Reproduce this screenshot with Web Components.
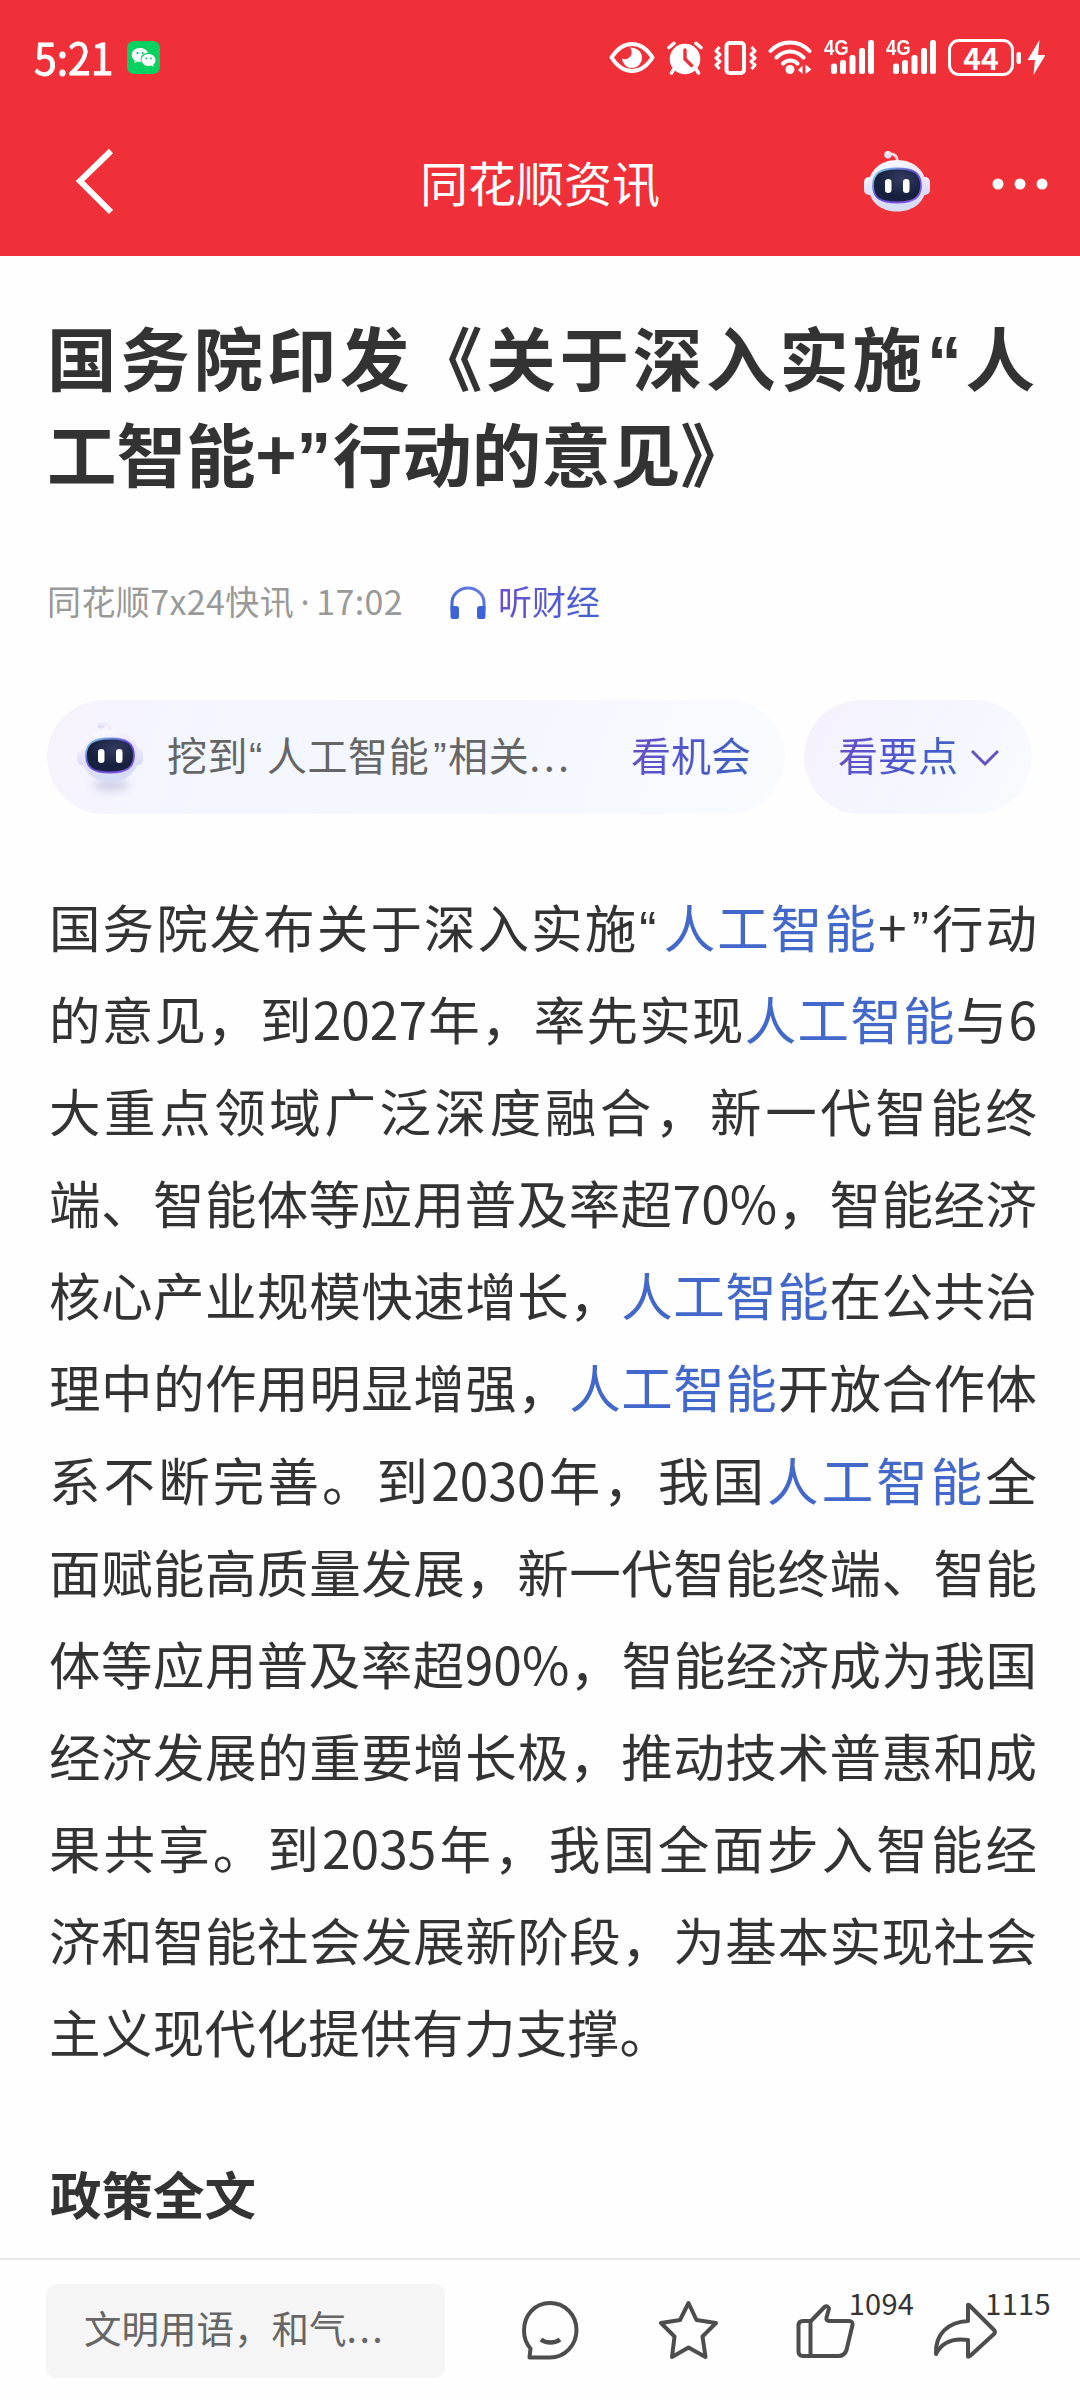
<!DOCTYPE html>
<html lang="zh-CN">
<head>
<meta charset="utf-8">
<title>同花顺资讯</title>
<style>
html,body{margin:0;padding:0;background:#fefefe}
body{font-family:"Noto Sans CJK SC",sans-serif;color:#333;width:1080px;height:2400px;overflow:hidden}
</style>
</head>
<body>
<news-page>
  <status-bar slot="top" time="5:21" battery="44"></status-bar>
  <title-bar slot="top">同花顺资讯</title-bar>
  <article-title>
    <text-line>国务院印发《关于深入实施<quote-mark>“</quote-mark>人</text-line>
    <text-line style="--w:max-content">工智能+<quote-mark close>”</quote-mark>行动的意见》</text-line>
  </article-title>
  <article-meta source="同花顺7x24快讯" time="17:02">听财经</article-meta>
  <hint-row>
    <hint-pill wide action="看机会">挖到<quote-mark>“</quote-mark>人工智能<quote-mark close>”</quote-mark>相关<span style="letter-spacing:3.300px">...</span></hint-pill>
    <hint-pill chevron action="看要点"></hint-pill>
  </hint-row>
  <article-body>
    <text-line>国务院发布关于深入实施<quote-mark>“</quote-mark><term-link>人工智能</term-link>+<quote-mark close>”</quote-mark>行动</text-line>
    <text-line>的意见，到2027年，率先实现<term-link>人工智能</term-link>与6</text-line>
    <text-line>大重点领域广泛深度融合，新一代智能终</text-line>
    <text-line>端、智能体等应用普及率超70%，智能经济</text-line>
    <text-line>核心产业规模快速增长，<term-link>人工智能</term-link>在公共治</text-line>
    <text-line>理中的作用明显增强，<term-link>人工智能</term-link>开放合作体</text-line>
    <text-line>系不断完善。到2030年，我国<term-link>人工智能</term-link>全</text-line>
    <text-line>面赋能高质量发展，新一代智能终端、智能</text-line>
    <text-line>体等应用普及率超90%，智能经济成为我国</text-line>
    <text-line>经济发展的重要增长极，推动技术普惠和成</text-line>
    <text-line>果共享。到2035年，我国全面步入智能经</text-line>
    <text-line>济和智能社会发展新阶段，为基本实现社会</text-line>
    <text-line style="--w:622px">主义现代化提供有力支撑。</text-line>
  </article-body>
  <section-heading>政策全文</section-heading>
  <action-bar slot="bottom" likes="1094" shares="1115">文明用语，和气<span style="letter-spacing:2.500px">...</span></action-bar>
</news-page>
<script>
const define = (name, render) => customElements.define(name, class extends HTMLElement {
  constructor(){ super(); this.attachShadow({mode:'open'}); }
  connectedCallback(){ this.shadowRoot.innerHTML = render(this); }
});

define('news-page', () => `<style>
:host{display:flex;flex-direction:column;width:1080px;height:2400px}
header{background:#f03038;height:256px;flex:none;display:flex;flex-direction:column}
main{flex:1;min-height:0;overflow:hidden;display:flex;flex-direction:column;padding:52px 43px 0 48px}
</style><header><slot name="top"></slot></header><main><slot></slot></main><slot name="bottom"></slot>`);

define('signal-icon', () => `<style>
:host{display:block;position:relative;width:51px;height:35px}svg{display:block}
span{position:absolute;left:0;top:-2px;font:700 22px/20px "Liberation Sans",sans-serif;color:#fff;transform:scaleX(.84);transform-origin:0 0}
</style><span>4G</span><svg width="51" height="35" fill="#fff"><rect x="7" y="23.500" width="6" height="10.500" rx="2.500"/><rect x="16" y="20" width="6" height="14" rx="2.500"/><rect x="25.500" y="15" width="6" height="19" rx="2.500"/><rect x="35" y="8" width="6" height="26" rx="2.500"/><rect x="44" y="0" width="6" height="34" rx="2.500"/></svg>`);

define('status-bar', el => `<style>
:host{display:flex;height:112px;color:#fff;padding:3px 35px 0 34px;box-sizing:border-box;align-items:center}
.t{font:400 44px/60px "Noto Sans CJK SC",sans-serif;width:93px;white-space:nowrap;margin-top:-3px}
.t span{display:inline-block;transform:scaleX(.93);transform-origin:0 50%;-webkit-text-stroke:.9px #fff}
.i{margin-left:auto;display:flex;align-items:center;height:40px}
svg{display:block}
.b{box-sizing:border-box;width:66px;height:37px;border:3px solid #fff;border-radius:11px;font:700 30px/30px "Noto Sans CJK SC",sans-serif;text-align:center}
</style>
<span class="t"><span>${el.getAttribute('time')}</span></span>
<svg width="33" height="33" viewBox="0 0 33 33"><rect width="33" height="33" rx="7" fill="#07d160"/><g fill="#fff"><path d="M13 7c-5 0-8.300 3-8.300 7 0 2.200 1.200 4 3 5.200L7.300 22l3-1.500c1.300.4 2.700.5 4 .3C12 15 17 11.500 21 12c-1-3-4-5-8-5z"/><path d="M21.500 13c-4 0-7 2.700-7 6s3 6 7 6c1 0 2-.2 2.800-.5l2.400 1.300-.5-2.200c1.500-1 2.300-2.700 2.300-4.600 0-3.300-3-6-7-6z"/></g><g fill="#07c160"><circle cx="10.500" cy="12" r="1.100"/><circle cx="15.700" cy="12" r="1.100"/><circle cx="19.400" cy="17.500" r=".9"/><circle cx="24" cy="17.500" r=".9"/></g></svg>
<div class="i">
<svg width="46" height="33" viewBox="0 0 46 33" style="margin-right:12px"><path d="M2.500 16.500C8 8 15 3 23 3s15 5 20.500 13.500C38 25 31 30 23 30S8 25 2.500 16.500z" fill="none" stroke="#fff" stroke-width="4" stroke-linejoin="round"/><path d="M21 6.500c6-.2 12 3.500 12 10a10 10 0 0 1-20 1c3 1.500 7 .5 8.700-2.500 1.600-3 1.300-6-.7-8.500z" fill="#fff"/></svg>
<svg width="36" height="34" viewBox="0 0 36 34" style="margin-right:11px"><g stroke="#fff" stroke-width="3.500" stroke-linecap="round"><path d="M2 6.500 7 2.300M34 6.500 29 2.300M7 28l-2.500 4M29 28l2.500 4"/></g><circle cx="18" cy="18" r="15.300" fill="#fff"/><path d="M18 9v9l6.500 6.500" fill="none" stroke="#f03038" stroke-width="3.400" stroke-linecap="round"/></svg>
<svg width="43" height="34" viewBox="0 0 43 34" style="margin-right:11px" fill="none" stroke="#fff"><rect x="12.500" y="2" width="17.500" height="30" rx="3" stroke-width="4"/><path d="M5.500 6 2 10l4 3.500-4 3.500 4 3.500L2 24l3.500 4M37.500 6l3.500 4-4 3.500 4 3.500-4 3.500 4 3.500-3.500 4" stroke-width="3" stroke-linejoin="round"/></svg>
<svg width="45" height="35" viewBox="0 0 45 35" style="margin-right:11px" fill="none" stroke="#fff" stroke-width="4" stroke-linecap="round"><path d="M2.500 11C13-.5 31-.5 41.500 11M8.500 17.500c8-8 19-8 27 0M15 23.500c4-4 10.500-4 14.500 0"/><circle cx="22" cy="29.500" r="4.500" fill="#fff" stroke="none"/><path d="m34.500 25.500v8.500l-4.500-4zM37.500 24.500v9.500l6-4.500z" fill="#fff" stroke="none"/></svg>
<signal-icon style="margin-right:11px"></signal-icon><signal-icon style="margin-right:11px"></signal-icon>
<div class="b">${el.getAttribute('battery')}</div>
<svg width="31" height="36" viewBox="0 0 31 36" fill="#fff"><rect x="2.500" y="12" width="4.500" height="12" rx="2"/><path d="M25.500 0 13.500 20h7.500l-1.500 15 12-20h-7.500z"/></svg>
</div>`);

let uid = 0;
define('robot-face', el => { const n = ++uid; return `<style>:host{display:block}svg{display:block;overflow:visible}</style>
<svg width="66" height="61" viewBox="0 0 66 61"><defs>
<linearGradient id="h${n}" x1="0" y1="0" x2=".3" y2="1"><stop offset="0" stop-color="#fff"/><stop offset=".5" stop-color="#e9e4fb"/><stop offset="1" stop-color="#d6dcf5"/></linearGradient>
<linearGradient id="r${n}" x1="0" y1="0" x2="1" y2="1"><stop offset="0" stop-color="#7fd4e8"/><stop offset=".5" stop-color="#6247d8"/><stop offset="1" stop-color="#8b5cf0"/></linearGradient>
<radialGradient id="f${n}" cx=".6" cy=".3"><stop offset="0" stop-color="#333b60"/><stop offset="1" stop-color="#17213f"/></radialGradient>
<filter id="b${n}" x="-50%" y="-100%" width="200%" height="300%"><feGaussianBlur stdDeviation="4"/></filter></defs>
${el.hasAttribute('shadow') ? `<ellipse cx="34" cy="64" rx="18" ry="6" fill="#9ca4ca" opacity=".45" filter="url(#b${n})"/>` : ''}
<g fill="url(#h${n})"><circle cx="24" cy="3.700" r="3.700"/><path d="M25 3c5-.5 8 2 8.500 7" fill="none" stroke="${el.hasAttribute('shadow') ? '#f0eafa' : '#f5dfe7'}" stroke-width="2.600"/><rect x="0" y="26" width="14" height="18" rx="5"/><rect x="52" y="26" width="14" height="18" rx="5"/><path d="M33 9C50 9 62 20 62 35S50 60.500 33 60.500 4.500 50 4.500 35 16 9 33 9z"/></g>
<path d="M33 17.500c17 0 24 5 24 17s-7 17-24 17-24-5-24-17 7-17 24-17z" fill="url(#f${n})" stroke="url(#r${n})" stroke-width="1.800"/>
<rect x="21" y="28" width="6.500" height="14" rx="3.200" fill="#fff"/><rect x="39" y="28" width="6.500" height="14" rx="3.200" fill="#fff"/></svg>`; });

define('title-bar', () => `<style>
:host{display:flex;height:144px;color:#fff;align-items:center;justify-content:space-between;padding:0 32px 0 70px;box-sizing:border-box}
div{width:184px;display:flex;align-items:center}.r{justify-content:space-between}
h1{margin:-6px 38px 0 0;font-size:48px;font-weight:400;line-height:60px}
svg{display:block}
</style><div class="l"><svg width="50" height="76" viewBox="0 0 50 76" fill="none" stroke="#fff" stroke-width="6"><path d="M41 5 10 35l31 31"/></svg></div>
<h1><slot></slot></h1>
<div class="r"><robot-face style="margin-top:-6px"></robot-face><svg width="56" height="12" fill="#fff"><circle cx="6" cy="6" r="5.500"/><circle cx="28" cy="6" r="5.500"/><circle cx="50" cy="6" r="5.500"/></svg></div>`);

define('quote-mark', el => `<style>:host{font-family:"Liberation Sans",sans-serif;line-height:1px;${el.hasAttribute('close') ? 'margin-left:var(--quote-gap,.1em);margin-right:.02em' : 'margin-left:.02em;margin-right:var(--quote-gap,.1em)'}}</style><slot></slot>`);
define('term-link', () => `<style>:host{color:#4368cb}</style><slot></slot>`);
define('text-line', () => `<style>:host{display:block;white-space:nowrap;width:var(--w,auto);text-align:justify;text-align-last:justify;text-spacing-trim:space-all}</style><slot></slot>`);
define('article-title', () => `<style>:host{display:block;--quote-gap:0em;font-size:69.500px;line-height:96px;font-weight:700;height:192px;flex:none;margin:0 2px 0 -1px}</style><slot></slot>`);

define('article-meta', el => `<style>
:host{display:flex;align-items:center;height:50px;margin-top:76px;font-size:34px;line-height:50px;color:#999;flex:none;white-space:nowrap}
.s{width:403px;letter-spacing:.4px;margin-left:-1px}i{display:inline-block;font-style:normal;font-family:"Noto Sans",sans-serif;line-height:1px;width:22px;text-align:center}
.g{background:linear-gradient(100deg,#6c4fd0,#3e63d6);-webkit-background-clip:text;color:transparent}
svg{margin:3px 12px 0 0;display:block}
</style><span class="s">${el.getAttribute('source')}<i>·</i>${el.getAttribute('time')}</span>
<svg width="36" height="34" viewBox="0 0 36 34"><defs><linearGradient id="g" x1="1" y1="0" x2="0" y2="1"><stop stop-color="#6a7be8"/><stop offset="1" stop-color="#3e63d6"/></linearGradient></defs><path d="M2 24V17a16 15 0 0 1 32 0v7" fill="none" stroke="url(#g)" stroke-width="3"/><path d="M.5 20H6q3 0 3 3v7.500q0 2.500-2.500 2.500H3Q.5 33 .5 30.500zM35.500 20H30q-3 0-3 3v7.500q0 2.500 2.500 2.500H33q2.500 0 2.500-2.500z" fill="#3e63d6"/></svg>
<span class="g"><slot></slot></span>`);

define('hint-row', () => `<style>:host{display:flex;justify-content:space-between;margin:74px 0 0 -1px;flex:none;width:985px}</style><slot></slot>`);
define('hint-pill', el => { const w = el.hasAttribute('wide'); return `<style>
:host{display:flex;align-items:center;box-sizing:border-box;height:114px;border-radius:57px;font-size:40px;line-height:60px;white-space:nowrap;
${w ? 'width:738px;padding:0 34px 0 30px;background:linear-gradient(110deg,#f7f2fc 0,#f4f6ff 20%,#f4f7fe 60%,#f8fcff)' : 'width:228px;padding:0 32px 0 34px;background:linear-gradient(120deg,#f6f1fc,#f4f6fe 50%,#f7fbff)'}}
.x{color:#666;margin:-6px 0 0 24px;letter-spacing:.6px}
.a{background:linear-gradient(110deg,#6c4fc0,#5254d0 40%,#3f63c0);-webkit-background-clip:text;color:transparent;margin:-6px 0 0 ${w ? 'auto' : '0'}}
svg{margin:1px 0 0 12px}
</style>${w ? '<robot-face shadow style="margin-top:-11px"></robot-face><span class="x"><slot></slot></span>' : ''}<span class="a">${el.getAttribute('action')}</span>
${el.hasAttribute('chevron') ? '<svg width="30" height="20" viewBox="0 0 30 20" fill="none" stroke="#6352c0" stroke-width="3"><path d="m2 3 13 13L28 3"/></svg>' : ''}`; });

define('article-body', () => `<style>:host{display:block;font-size:51.500px;line-height:92.100px;margin:66px 0 0 1px;flex:none}</style><slot></slot>`);
define('section-heading', () => `<style>:host{display:block;font-size:51.500px;font-weight:700;line-height:80px;margin-top:76px;padding-left:2px;flex:none}</style><slot></slot>`);

define('action-bar', el => `<style>
:host{display:flex;box-sizing:border-box;height:142px;flex:none;border-top:2px solid #e9e9e9;align-items:flex-start;padding:24px 0 0 46px}
.in{box-sizing:border-box;width:400px;height:94px;border-radius:10px;background:#f5f5f5;color:#666;font-size:37.500px;line-height:85px;padding-left:38px;white-space:nowrap}
.c{display:flex;padding-top:13px;width:137px;height:70px;position:relative}
.c svg{display:block;flex:none}
b{position:absolute;font-weight:400;font-size:29px;line-height:30px;color:#333;left:55px;top:3px;letter-spacing:.3px}
</style><div class="in"><slot></slot></div>
<div class="c" style="margin-left:75px"><svg width="62" height="64" viewBox="0 0 62 64" fill="none" stroke="#4d4d4d" stroke-width="4" stroke-linejoin="round"><path d="M30 60.500H9.500l1-9C6 46.500 4 40 4 33.500 4 18 15 6 30 6s26.500 12 26.500 27S45 60.500 30 60.500z"/><path d="M21 42.500c5 4 14 4 19 0" stroke-width="4.500"/></svg></div>
<div class="c"><svg width="62" height="64" viewBox="0 0 62 64" fill="none" stroke="#4d4d4d" stroke-width="4" stroke-linejoin="round"><path d="m31.500 6 8 17L59 26 45.500 39.500 48.500 60 31.500 50.500 15 60l2.500-20.500L4 26l19-3z"/></svg></div>
<div class="c"><svg width="64" height="64" viewBox="0 0 64 64" fill="none" stroke="#4d4d4d" stroke-width="4" stroke-linejoin="round"><path d="M9 24h8L30.500 10q3-2 4.500 1.500l-2.500 9Q32 24 35 24h20q4 0 3.500 4l-6 25q-2 6-8 6H9q-4.500 0-4.500-4.500v-26Q4.500 24 9 24zM16.500 24v35"/></svg><b>${el.getAttribute('likes')}</b></div>
<div class="c" style="width:150px"><svg width="68" height="64" viewBox="0 0 68 64" fill="none" stroke="#4d4d4d" stroke-width="4" stroke-linejoin="round"><path d="M38 8q0-1 2 1L64 33q2 2 0 4L40 59q-2 1.500-2 0V43C24 41 12 45 6 57 5 37 18 25 38 24z"/></svg><b>${el.getAttribute('shares')}</b></div>`);
</script>
</body>
</html>
